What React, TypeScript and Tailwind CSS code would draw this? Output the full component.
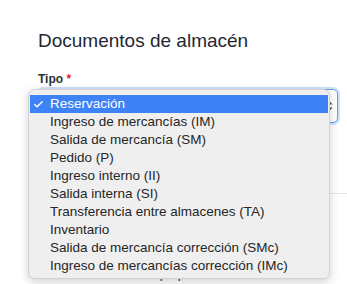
import { Check } from "lucide-react";

const options = [
  "Reservación",
  "Ingreso de mercancías (IM)",
  "Salida de mercancía (SM)",
  "Pedido (P)",
  "Ingreso interno (II)",
  "Salida interna (SI)",
  "Transferencia entre almacenes (TA)",
  "Inventario",
  "Salida de mercancía corrección (SMc)",
  "Ingreso de mercancías corrección (IMc)",
];

export default function App() {
  return (
    <div className="relative h-[284px] w-[347px] overflow-hidden bg-white font-['Liberation_Sans',Arial,sans-serif]">
      <div className="pl-[38px] pt-[29px]">
        <h2 className="text-[19px] leading-[24px] text-[#1f2733]">Documentos de almacén</h2>

        <div className="mt-[19px]">
          <p className="text-[12px] font-bold leading-[14px] text-[#2a2f36]">
            Tipo <span className="text-[#e0262b]">*</span>
          </p>
          <div className="mt-[3px] flex h-[34px] w-[300px] items-center justify-end rounded-[5px] border border-[#5b9ee8] pr-[4px] shadow-[0_0_0_2px_rgba(120,170,240,0.35)]">
            <svg width="7" height="12" viewBox="0 0 7 12" className="text-[#555]">
              <path d="M0.5 4.5 L3.5 1 L6.5 4.5 Z M0.5 7.5 L3.5 11 L6.5 7.5 Z" fill="currentColor" />
            </svg>
          </div>
        </div>

        <div className="mt-[70px] h-px bg-[#e6e6e6]" />

        <p className="mt-[72px] pl-[30px] text-[13px] leading-[16px] text-[#333]">Seleccione un tipo para continuar</p>
      </div>

      <div className="absolute left-[28px] top-[89px] w-[302px] rounded-[6px] border border-[#d2d2d2] bg-[#efefef] pb-[3px] pt-[5px] shadow-[0_3px_10px_rgba(0,0,0,0.18)]">
        {options.map((option, index) => (
          <div
            key={option}
            className={
              index === 0
                ? "mx-[1px] flex h-[18px] items-center bg-[#3d83f6] text-white"
                : "mx-[1px] flex h-[18px] items-center text-[#262626]"
            }
          >
            <span className="flex w-[20px] justify-end pr-[6px]">
              {index === 0 ? <Check size={11} strokeWidth={3} /> : null}
            </span>
            <span className="text-[13.5px] leading-[18px]">{option}</span>
          </div>
        ))}
      </div>
    </div>
  );
}
